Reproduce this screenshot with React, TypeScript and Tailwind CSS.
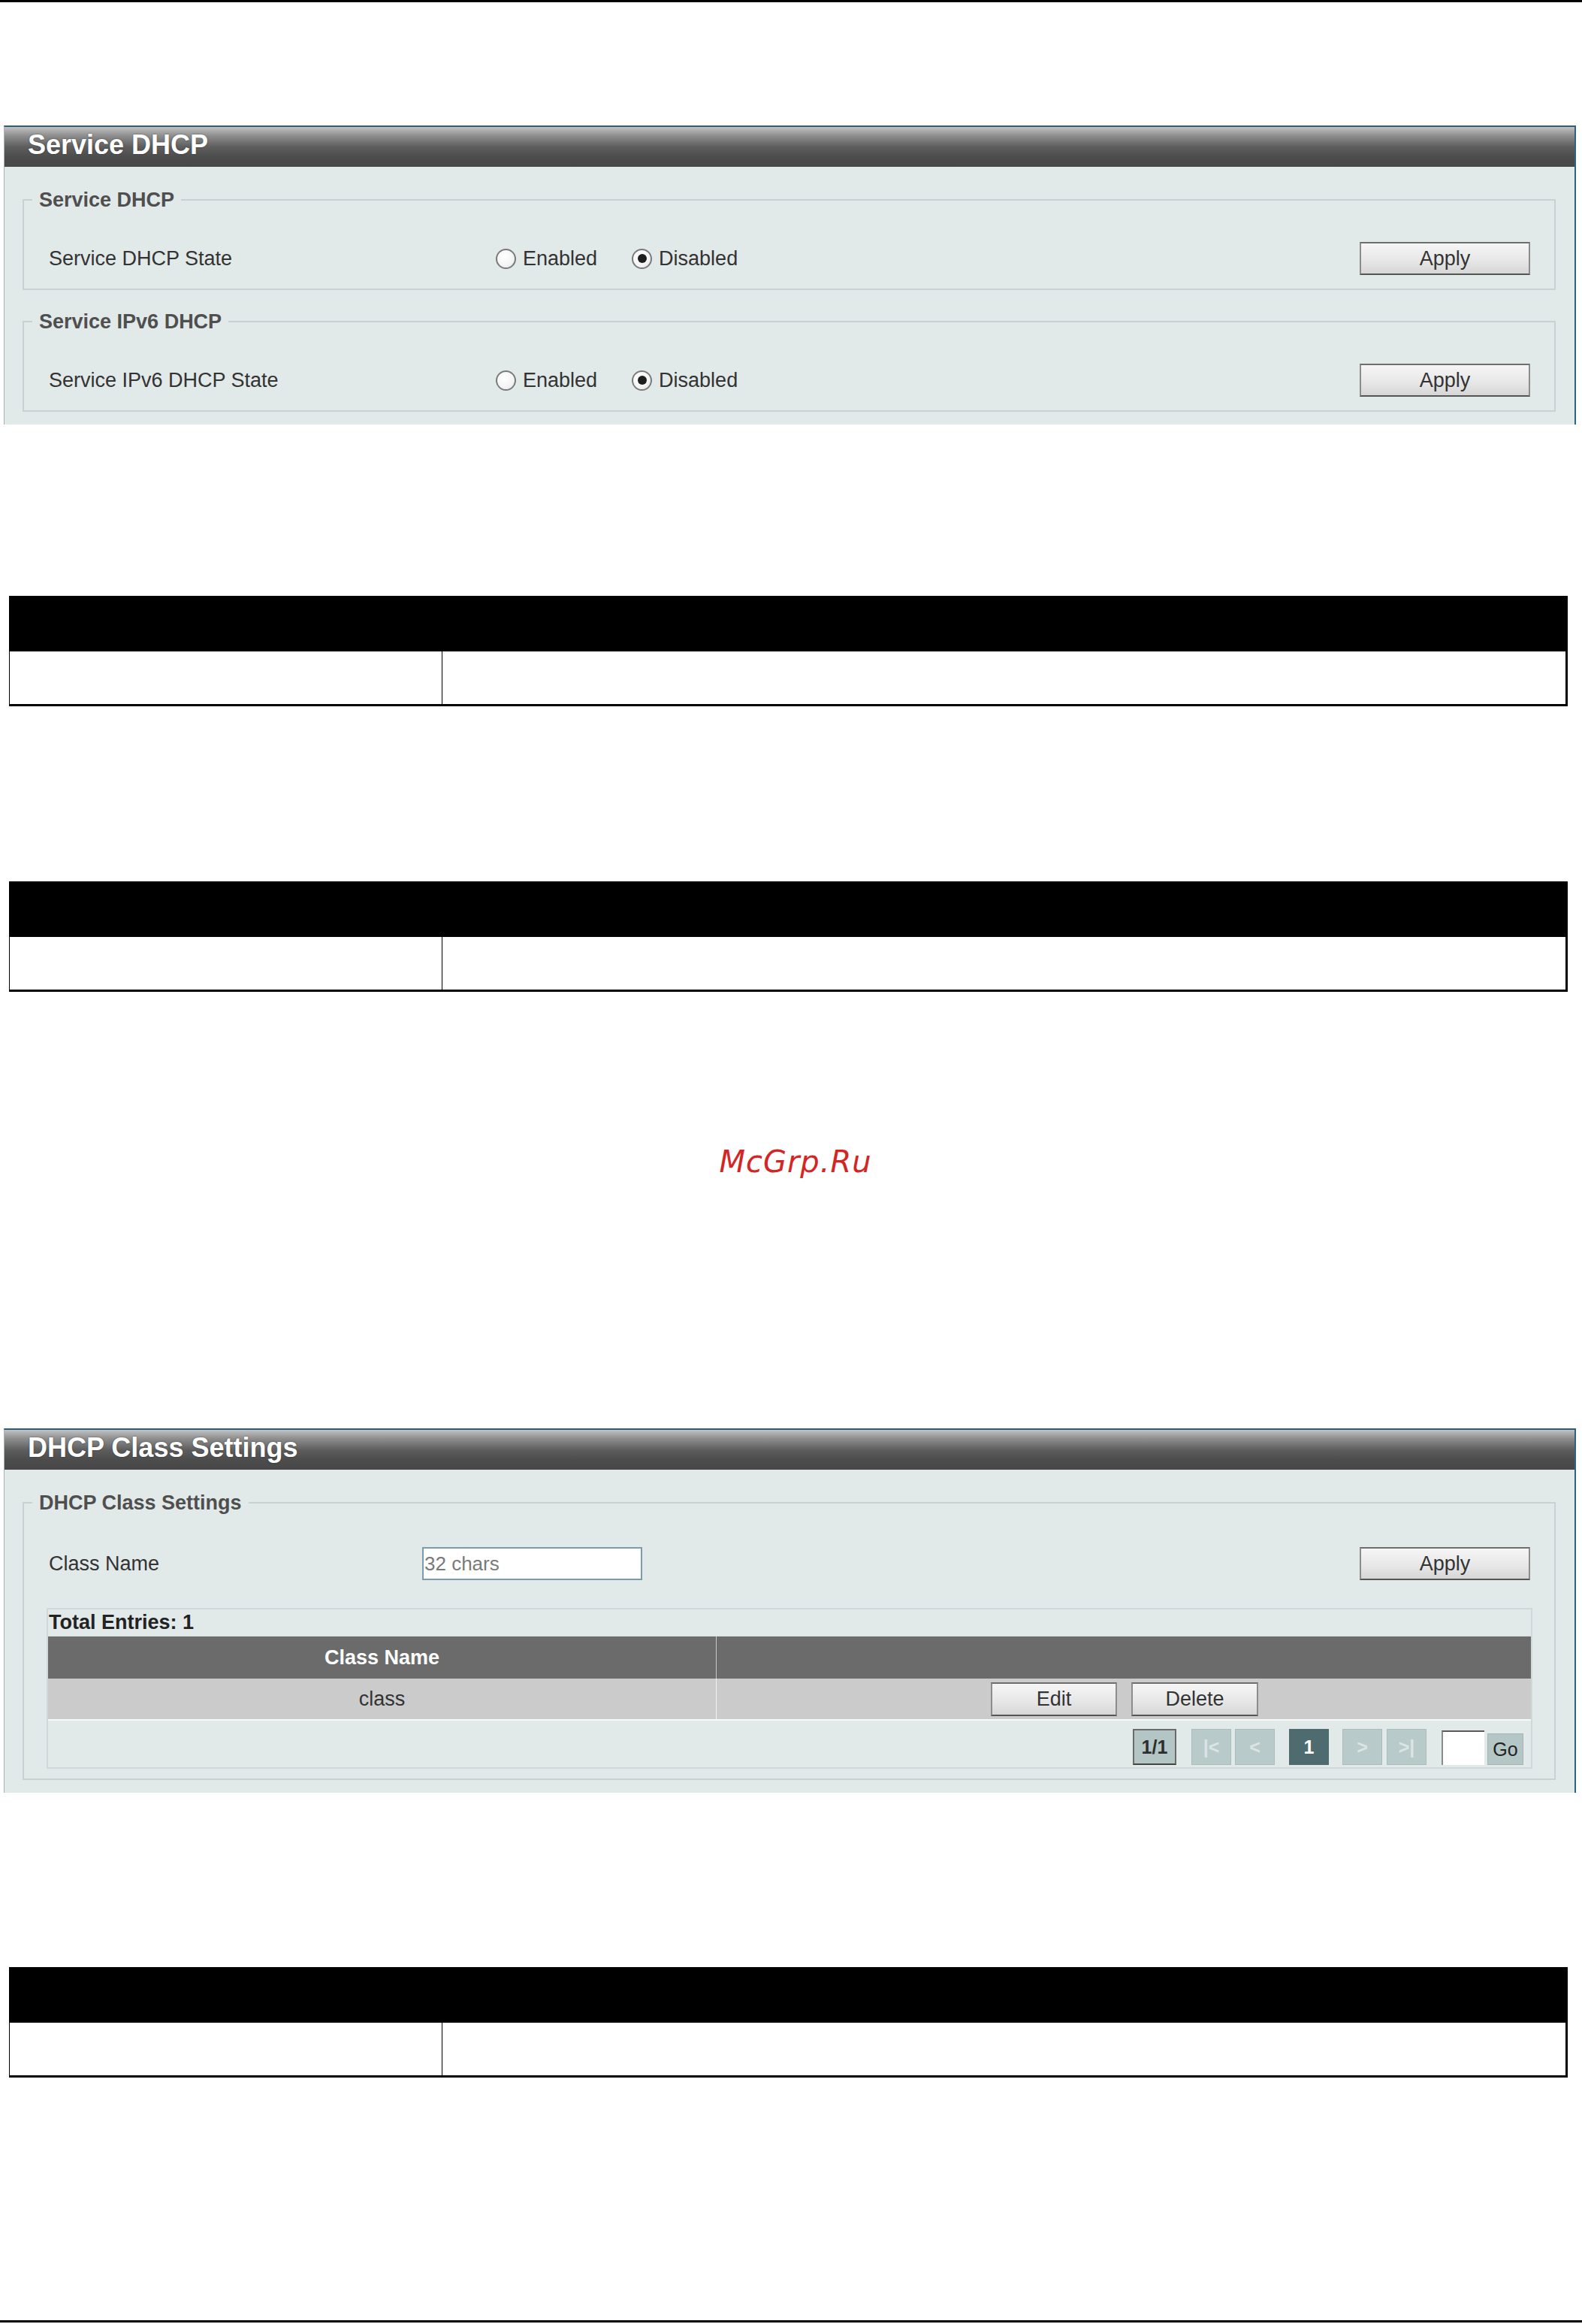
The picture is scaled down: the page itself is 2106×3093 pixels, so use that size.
import React from "react";

const btn =
  "flex items-center justify-center text-[27px] text-[#333] bg-[linear-gradient(to_bottom,#f6f6f6_0%,#e6e6e6_60%,#d6d6d6_100%)] border-2 border-[#8c8c8c] border-b-[#555] border-t-[#6e6e6e]";

function Radio({ checked, label, className = "" }: { checked: boolean; label: string; className?: string }) {
  return (
    <div className={`flex items-center ${className}`}>
      <div className="w-[27px] h-[27px] rounded-full border-2 border-[#7a7a7a] bg-[radial-gradient(circle_at_40%_35%,#ffffff_0%,#f4f4f4_60%,#dcdcdc_100%)] flex items-center justify-center">
        {checked && <div className="w-[12px] h-[12px] rounded-full bg-[#1e1e1e]" />}
      </div>
      <span className="ml-[9px] text-[27px] text-[#333] leading-none">{label}</span>
    </div>
  );
}

function Panel({ title, children, className = "" }: { title: string; children: React.ReactNode; className?: string }) {
  return (
    <div
      className={`ml-[5px] w-[2093px] border-t-[2px] border-t-[#2a5c80] border-l border-l-[#a7b2b4] border-r-[2px] border-r-[#2f6386] bg-[#e2e9e9] ${className}`}
    >
      <div className="h-[53px] flex items-center pl-[31px] pb-[5px] bg-[linear-gradient(to_bottom,#c2c2c2_0%,#8e8e8e_22%,#5e5e5e_50%,#4c4c4c_75%,#474747_100%)] text-white font-bold text-[36px] leading-none [text-shadow:0_0_2px_rgba(0,0,0,0.5)]">
        {title}
      </div>
      {children}
    </div>
  );
}

function Fieldset({ legend, children, className = "" }: { legend: string; children: React.ReactNode; className?: string }) {
  return (
    <fieldset className={`ml-[24px] mr-[25px] border-2 border-[#c8d2d2] ${className}`}>
      <legend className="ml-[11px] px-[9px] text-[27px] font-bold text-[#4f4f4f] leading-[32px]">{legend}</legend>
      {children}
    </fieldset>
  );
}

function BlackTable({ className = "" }: { className?: string }) {
  return (
    <div className={`ml-[12px] w-[2075px] border-l border-l-black border-r-[3px] border-r-black border-b-[3px] border-b-black ${className}`}>
      <div className="h-[74px] bg-black" />
      <div className="h-[70px] flex bg-white">
        <div className="w-[576px] border-r border-r-black" />
        <div className="flex-1" />
      </div>
    </div>
  );
}

function StateRow({ label }: { label: string }) {
  return (
    <div className="pt-[40px] pb-[18px]">
      <div className="flex items-center h-[44px] pl-[33px] pr-[32px]">
        <span className="w-[595px] text-[27px] text-[#333] leading-none">{label}</span>
        <Radio checked={false} label="Enabled" />
        <Radio checked label="Disabled" className="ml-[46px]" />
        <button className={`ml-auto w-[227px] h-[44px] ${btn}`}>Apply</button>
      </div>
    </div>
  );
}

function PageBox({ children, variant }: { children: React.ReactNode; variant: "info" | "off" | "on" }) {
  const cls =
    variant === "info"
      ? "w-[58px] bg-[#b3c5c5] border-2 border-[#6a6a6a] border-b-[#444] text-[#2e2e2e]"
      : variant === "on"
      ? "w-[53px] bg-[#4e6b6f] border border-[#4e6b6f] text-white"
      : "w-[53px] bg-[#b9caca] border border-[#aabcbc] text-[#dbe5e5]";
  return (
    <div className={`h-[48px] flex items-center justify-center text-[25px] font-bold leading-none ${cls}`}>{children}</div>
  );
}

export default function App() {
  return (
    <div className="relative w-[2106px] h-[3093px] bg-white flex flex-col font-['Liberation_Sans',Arial,sans-serif]">
      <div className="h-[3px] bg-black" />

      <Panel title="Service DHCP" className="mt-[164px] pb-[17px]">
        <Fieldset legend="Service DHCP" className="mt-[28px]">
          <StateRow label="Service DHCP State" />
        </Fieldset>
        <Fieldset legend="Service IPv6 DHCP" className="mt-[26px]">
          <StateRow label="Service IPv6 DHCP State" />
        </Fieldset>
      </Panel>

      <BlackTable className="mt-[228px]" />
      <BlackTable className="mt-[233px]" />

      <div className="mt-[202px] h-[48px] flex items-center justify-center pl-[12px]">
        <span className="font-['DejaVu_Sans',sans-serif] italic text-[40px] leading-none tracking-[1px] text-[#d42525]">McGrp.Ru</span>
      </div>

      <Panel title="DHCP Class Settings" className="mt-[331px] pb-[17px]">
        <Fieldset legend="DHCP Class Settings" className="mt-[28px]">
          <div className="pt-[43px] pb-[13px]">
            <div className="flex items-center h-[44px] pl-[33px] pr-[32px]">
              <span className="w-[497px] text-[27px] text-[#333] leading-none">Class Name</span>
              <input
                className="w-[293px] h-[44px] bg-white border-2 border-[#7b9bb5] text-[26px] text-[#333] pl-[1px] placeholder:text-[#7a7a7a] outline-none"
                placeholder="32 chars"
              />
              <button className={`ml-auto w-[227px] h-[44px] ${btn}`}>Apply</button>
            </div>

            <div className="mt-[37px] ml-[30px] mr-[29px] border-2 border-[#d0d9d9]">
              <div className="h-[35px] flex items-center pl-[1px] text-[27px] font-bold text-[#222] leading-none">Total Entries: 1</div>
              <div className="h-[57px] flex bg-[#6b6b6b] border-t border-t-[#d8dede]">
                <div className="w-[890px] flex items-center justify-center text-white font-bold text-[27px] leading-none border-r border-r-[#c8c8c8]">
                  Class Name
                </div>
                <div className="flex-1" />
              </div>
              <div className="h-[54px] flex bg-[#cbcbcb]">
                <div className="w-[890px] flex items-center justify-center text-[27px] text-[#333] leading-none border-r border-r-[#f2f2f2]">
                  class
                </div>
                <div className="flex-1 flex items-center justify-center gap-[19px] pl-[2px]">
                  <button className={`w-[168px] h-[45px] ${btn}`}>Edit</button>
                  <button className={`w-[169px] h-[45px] ${btn}`}>Delete</button>
                </div>
              </div>
              <div className="h-[64px] flex items-end justify-end pr-[10px] pb-[3px] border-t-2 border-t-[#f7f9f9]">
                <PageBox variant="info">1/1</PageBox>
                <div className="ml-[20px]">
                  <PageBox variant="off">|&lt;</PageBox>
                </div>
                <div className="ml-[5px]">
                  <PageBox variant="off">&lt;</PageBox>
                </div>
                <div className="ml-[19px]">
                  <PageBox variant="on">1</PageBox>
                </div>
                <div className="ml-[18px]">
                  <PageBox variant="off">&gt;</PageBox>
                </div>
                <div className="ml-[6px]">
                  <PageBox variant="off">&gt;|</PageBox>
                </div>
                <div className="ml-[20px] w-[57px] h-[46px] bg-white border-t-2 border-l-2 border-t-[#5a5a5a] border-l-[#8a8a8a]" />
                <div className="ml-[4px] w-[48px] h-[42px] flex items-center justify-center bg-[#b5c6c6] border border-[#a3b4b4] text-[25px] text-[#222] leading-none">
                  Go
                </div>
              </div>
            </div>
          </div>
        </Fieldset>
      </Panel>

      <BlackTable className="mt-[232px]" />

      <div className="mt-auto mb-[2px] h-[3px] bg-black" />
    </div>
  );
}
